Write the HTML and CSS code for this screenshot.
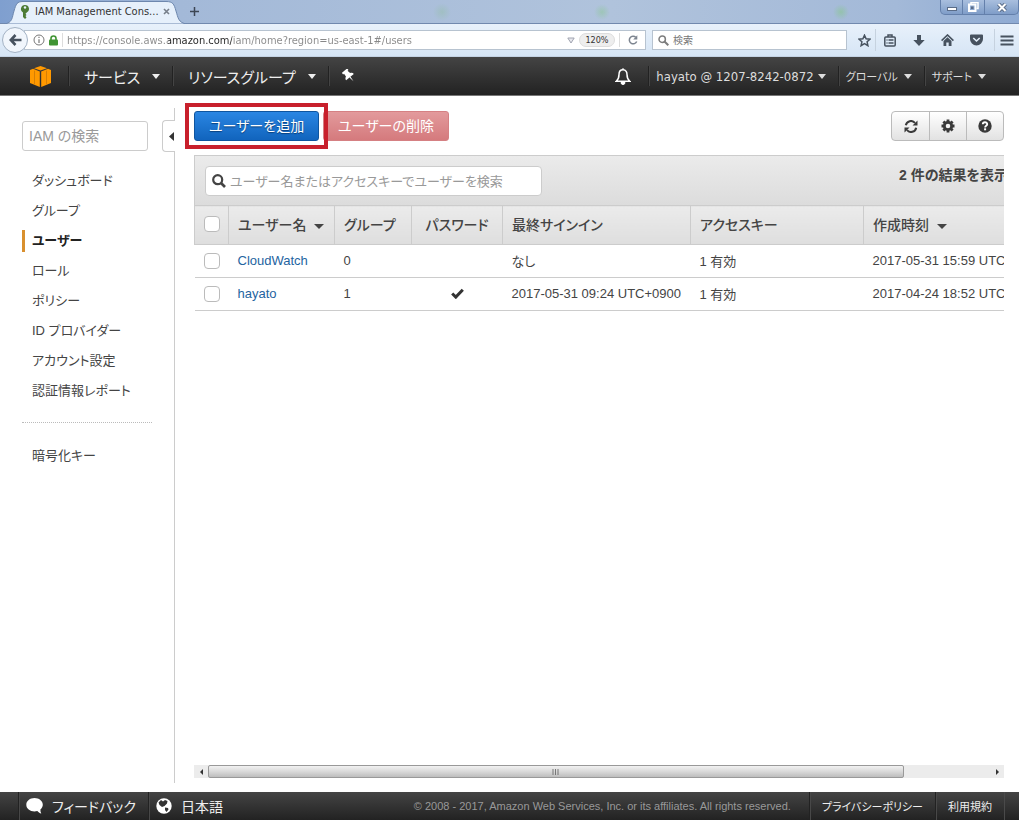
FILE: index.html
```
<!DOCTYPE html>
<html lang="ja">
<head>
  <meta charset="utf-8">
  <title>IAM Management Console</title>
  <link rel="stylesheet" href="styles.css">
</head>
<body>

<!-- browser window -->
<div class="tabbar">
  <div class="tab">
    <svg class="tab-shape" width="184" height="24" viewBox="0 0 184 24"><path d="M0 24C9 23 8 17 10 11C12 4 13 1.500 19 1.500H162C169 1.500 170 4 172 11C174 17 174 23 183 24Z" fill="#e6f0fb" stroke="#6d87ae"/></svg>
    <svg class="tab-icon" width="10" height="14" viewBox="0 0 10 14"><path d="M5 0a4 4 0 0 0-2 7.500V12l2 2 1.500-1.500L5.500 11l1-1-1-1.300 1-1A4 4 0 0 0 5 0z" fill="#4d7c35"/><circle cx="5" cy="2.500" r="1.200" fill="#e6f0fb"/></svg>
    <span class="tab-title">IAM Management Cons...</span>
    <button class="tab-close" aria-label="閉じる"><svg width="7" height="7" viewBox="0 0 7 7"><path d="M1 1l5 5M6 1L1 6" stroke="#777f8a" stroke-width="1.600"/></svg></button>
  </div>
  <button class="tab-new" aria-label="新しいタブ"><svg width="9" height="9" viewBox="0 0 9 9"><path d="M4.500 0v9M0 4.500h9" stroke="#3c4654" stroke-width="1.500"/></svg></button>
  <div class="win-buttons">
    <button aria-label="最小化"><svg width="10" height="10" viewBox="0 0 10 10"><rect x=".5" y="5.500" width="9" height="3" fill="#fff" stroke="#5a6c88"/></svg></button>
    <button aria-label="元に戻す"><svg width="11" height="10" viewBox="0 0 11 10"><path d="M3 2V.5h7v6H8.500" fill="none" stroke="#fff" stroke-width="1.500"/><rect x="1" y="2.500" width="6.500" height="6.500" fill="none" stroke="#fff" stroke-width="2"/><rect x="3" y="4.500" width="2.500" height="2.500" fill="#5a6c88"/></svg></button>
    <button class="win-close" aria-label="ウィンドウを閉じる"><svg width="10" height="9" viewBox="0 0 10 9"><path d="M1.500 1l7 7M8.500 1l-7 7" stroke="#5a6c88" stroke-width="4"/><path d="M1.500 1l7 7M8.500 1l-7 7" stroke="#fff" stroke-width="2"/></svg></button>
  </div>
</div>

<div class="navbar">
  <button class="back" aria-label="戻る"><svg width="13" height="12" viewBox="0 0 13 12"><path d="M6.500 1L1.800 6l4.700 5M2 6h10.500" fill="none" stroke="#47525f" stroke-width="2.600"/></svg></button>
  <div class="urlbox">
    <svg width="12" height="12" viewBox="0 0 12 12"><circle cx="6" cy="6" r="5" fill="none" stroke="#777"/><path d="M6 5.200V9M6 2.800v1.300" stroke="#777" stroke-width="1.200"/></svg>
    <svg width="9" height="11" viewBox="0 0 9 11"><path d="M2 5V3.500a2.500 2.500 0 0 1 5 0V5" fill="none" stroke="#3f9433" stroke-width="1.600"/><rect y="4.500" width="9" height="6" rx="1" fill="#3f9433"/></svg>
    <input class="url" type="text" aria-label="URL" value="https://console.aws.amazon.com/iam/home?region=us-east-1#/users">
    <svg width="8" height="7" viewBox="0 0 8 7"><path d="M.8 1h6.400L4 6z" fill="#e8e8ee" stroke="#a0a4b0"/></svg>
    <button class="zoom">120%</button>
    <button class="reload" aria-label="更新"><svg width="10" height="10" viewBox="0 0 10 10"><path d="M7.800 2.300A3.800 3.800 0 1 0 8.700 6.500" fill="none" stroke="#7d8590" stroke-width="1.500"/><path d="M9.300.3v4.200H5.200z" fill="#7d8590"/></svg></button>
  </div>
  <label class="searchbox">
    <svg width="11" height="11" viewBox="0 0 11 11"><circle cx="4.200" cy="4.200" r="3.200" fill="none" stroke="#7d7d7d" stroke-width="1.500"/><path d="M6.500 6.500L10.300 10.300" stroke="#7d7d7d" stroke-width="2"/></svg>
    <input type="text" placeholder="検索" aria-label="検索">
  </label>
  <div class="tools">
    <button aria-label="ブックマーク"><svg width="13" height="13" viewBox="0 0 13 13"><path d="M6.500 1.200l1.600 3.600 3.900.4-2.900 2.600.8 3.900-3.400-2-3.400 2 .8-3.900L1 5.200l3.900-.4z" fill="none" stroke="#47525f" stroke-width="1.500"/></svg></button>
    <button class="split" aria-label="ブックマーク一覧"><svg width="12" height="13" viewBox="0 0 12 13"><path d="M4 3V1h4v2" fill="none" stroke="#47525f" stroke-width="1.500"/><rect x=".8" y="3" width="10.400" height="9" rx="1" fill="none" stroke="#47525f" stroke-width="1.500"/><path d="M2.500 6h1M4.500 6h5M2.500 9h1M4.500 9h5" stroke="#47525f" stroke-width="1.300"/></svg></button>
    <button aria-label="ダウンロード"><svg width="12" height="13" viewBox="0 0 12 13"><path d="M4 1h4v5h3.700L6 12 .3 6H4z" fill="#47525f"/></svg></button>
    <button aria-label="ホーム"><svg width="13" height="12" viewBox="0 0 13 12"><path d="M.6 6.600L6.500 1l5.900 5.600" fill="none" stroke="#47525f" stroke-width="1.600"/><path d="M2.500 7l4-3.700 4 3.700v5H7.700V8.500H5.300V12H2.500z" fill="#47525f"/></svg></button>
    <button aria-label="Pocket"><svg width="13" height="12" viewBox="0 0 13 12"><path d="M1 .5h11a1 1 0 0 1 1 1V5a6.500 6.500 0 0 1-13 0V1.500a1 1 0 0 1 1-1z" fill="#47525f"/><path d="M3.300 4l3.200 3 3.200-3" fill="none" stroke="#e4effa" stroke-width="1.600"/></svg></button>
    <button class="split" aria-label="メニュー"><svg width="14" height="11" viewBox="0 0 14 11"><path d="M.5 1.500h13M.5 5.500h13M.5 9.500h13" stroke="#47525f" stroke-width="2"/></svg></button>
  </div>
</div>

<!-- console header -->
<header class="aws-nav">
  <a class="logo" href="#" aria-label="AWS"><svg width="21" height="21" viewBox="0 0 21 21"><path d="M10.500 0L17 2.200l-6.500 2.300L4 2.200zM0 4l3-1.200L9.800 5.500V21L0 17zM21 4l-3-1.200-6.800 2.700V21L21 17z" fill="#f90"/><path d="M4.500 4.700v13.700M16.500 4.700v13.700" stroke="#d67f05"/></svg></a>
  <button class="nav-item">サービス <i class="caret"></i></button>
  <button class="nav-item">リソースグループ <i class="caret"></i></button>
  <button class="nav-item pin" aria-label="ピン留め"><svg width="14" height="14" viewBox="0 0 14 14"><g transform="rotate(-40 7 7)" fill="#fff"><path d="M3.500 0h7v2H9.300l.4 3.500c1.600.7 2.300 1.600 2.300 3H2c0-1.400.7-2.300 2.300-3L4.700 2H3.500z"/><path d="M6.300 8.500h1.400L7 14z"/></g></svg></button>
  <div class="nav-right">
    <button class="bell" aria-label="通知"><svg width="16" height="17" viewBox="0 0 16 17"><path d="M8 1.800C4.900 1.800 4 4.400 4 6.500c0 3.800-1 5.200-2.700 6.700h13.400C13 11.700 12 10.300 12 6.500c0-2.100-.9-4.700-4-4.700z" fill="none" stroke="#fff" stroke-width="1.500"/><path d="M8 0v2M6 14.500h4a2 2 0 0 1-4 0z" stroke="#fff" fill="#fff"/></svg></button>
    <button class="nav-item account">hayato @ 1207-8242-0872 <i class="caret"></i></button>
    <button class="nav-item">グローバル <i class="caret"></i></button>
    <button class="nav-item">サポート <i class="caret"></i></button>
  </div>
</header>

<div class="page">
  <aside class="sidebar">
    <input class="side-search" type="text" placeholder="IAM の検索" aria-label="IAM の検索">
    <nav class="side-nav">
      <a href="#">ダッシュボード</a>
      <a href="#">グループ</a>
      <a class="active" href="#">ユーザー</a>
      <a href="#">ロール</a>
      <a href="#">ポリシー</a>
      <a href="#">ID プロバイダー</a>
      <a href="#">アカウント設定</a>
      <a href="#">認証情報レポート</a>
      <hr>
      <a href="#">暗号化キー</a>
    </nav>
    <button class="collapse" aria-label="サイドバーを閉じる"><svg width="5" height="9" viewBox="0 0 5 9"><path d="M5 0v9L0 4.500z" fill="#333"/></svg></button>
  </aside>

  <main class="content">
    <div class="actions">
      <div class="marked"><button class="btn primary">ユーザーを追加</button></div>
      <button class="btn danger">ユーザーの削除</button>
      <div class="btn-group">
        <button aria-label="更新"><svg width="14" height="13" viewBox="0 0 14 13"><path d="M1.800 5.300A5.200 5.200 0 0 1 11 3M12.200 7.700A5.200 5.200 0 0 1 3 10" fill="none" stroke="#3a3a3a" stroke-width="2"/><path d="M13.500.5v5h-5zM.5 12.500v-5h5z" fill="#3a3a3a"/></svg></button>
        <button aria-label="設定"><svg width="14" height="14" viewBox="0 0 14 14"><path d="M7 .5v13M.5 7h13M2.400 2.400l9.200 9.200M11.600 2.400l-9.200 9.200" stroke="#3a3a3a" stroke-width="2.800"/><circle cx="7" cy="7" r="3.700" fill="#f2f2f2" stroke="#3a3a3a" stroke-width="2.800"/></svg></button>
        <button aria-label="ヘルプ"><svg width="14" height="14" viewBox="0 0 14 14"><circle cx="7" cy="7" r="6.700" fill="#3a3a3a"/><path d="M4.800 5.300C4.800 2.600 9.200 2.600 9.200 5.200 9.200 6.800 7.100 6.700 7.100 8.400" fill="none" stroke="#fff" stroke-width="1.900"/><rect x="6.100" y="9.300" width="2" height="2" fill="#fff"/></svg></button>
      </div>
    </div>

    <div class="panel">
      <div class="filter">
        <label class="user-search">
          <svg width="14" height="14" viewBox="0 0 14 14"><circle cx="5.700" cy="5.700" r="4.500" fill="none" stroke="#444" stroke-width="2.200"/><path d="M9 9l4 4" stroke="#444" stroke-width="2.600"/></svg>
          <input type="text" placeholder="ユーザー名またはアクセスキーでユーザーを検索" aria-label="ユーザーを検索">
        </label>
        <strong class="count">2 件の結果を表示</strong>
      </div>
      <table class="users">
        <colgroup>
          <col class="c-check"><col class="c-name"><col class="c-group"><col class="c-pass"><col class="c-signin"><col class="c-key"><col class="c-date">
        </colgroup>
        <thead>
          <tr>
            <th><input type="checkbox" aria-label="すべて選択"></th>
            <th>ユーザー名 <i class="caret"></i></th>
            <th>グループ</th>
            <th class="center">パスワード</th>
            <th>最終サインイン</th>
            <th>アクセスキー</th>
            <th>作成時刻 <i class="caret"></i></th>
          </tr>
        </thead>
        <tbody>
          <tr>
            <td><input type="checkbox" aria-label="CloudWatch"></td>
            <td><a href="#">CloudWatch</a></td>
            <td>0</td>
            <td></td>
            <td>なし</td>
            <td>1 有効</td>
            <td>2017-05-31 15:59 UTC+0900</td>
          </tr>
          <tr>
            <td><input type="checkbox" aria-label="hayato"></td>
            <td><a href="#">hayato</a></td>
            <td>1</td>
            <td class="center"><svg width="13" height="11" viewBox="0 0 13 11"><path d="M1.200 5.500l3.600 3.600 7-7.400" fill="none" stroke="#333" stroke-width="3"/></svg></td>
            <td>2017-05-31 09:24 UTC+0900</td>
            <td>1 有効</td>
            <td>2017-04-24 18:52 UTC+0900</td>
          </tr>
        </tbody>
      </table>
    </div>

    <div class="scrollbar">
      <button aria-label="左へ"><svg width="3" height="6" viewBox="0 0 3 6"><path d="M3 0v6L0 3z" fill="#333"/></svg></button>
      <div class="track"><div class="thumb"><svg width="7" height="6" viewBox="0 0 7 6"><path d="M1 0v6M3.500 0v6M6 0v6" stroke="#777"/></svg></div></div>
      <button aria-label="右へ"><svg width="3" height="6" viewBox="0 0 3 6"><path d="M0 0v6l3-3z" fill="#333"/></svg></button>
    </div>
  </main>
</div>

<footer class="aws-footer">
  <button class="foot-item"><svg width="17" height="16" viewBox="0 0 17 16"><path d="M8.500 0C4 0 .3 2.900.3 6.700s3.700 6.700 8.200 6.700c1 0 1.900-.1 2.800-.4.900 1.200 2.300 2.200 4 2.500-.7-1.200-1-2.600-.9-4.100 1.500-1.200 2.400-2.800 2.400-4.700C16.800 2.900 13 0 8.500 0z" fill="#fff"/></svg>フィードバック</button>
  <button class="foot-item"><svg width="16" height="16" viewBox="0 0 16 16"><circle cx="8" cy="8" r="7.700" fill="#fff"/><path d="M2.500 4.500L5 2l2 1.500L9 2l2.500 1-.5 2.500L8.500 8 6 9 3.500 7zM9 9.500l3 .5.500 1.500-2 2.500-1.500-2z" fill="#333"/></svg>日本語</button>
  <span class="copyright">© 2008 - 2017, Amazon Web Services, Inc. or its affiliates. All rights reserved.</span>
  <a class="foot-item small" href="#">プライバシーポリシー</a>
  <a class="foot-item small last" href="#">利用規約</a>
</footer>

</body>
</html>
```
FILE: styles.css
```
* {
  box-sizing: border-box;
}
body {
  margin: 0;
  padding-right: 5px;
  min-height: 100vh;
  display: flex;
  flex-direction: column;
  background: #fff;
  color: #444;
  font-family: "Liberation Sans", "Noto Sans CJK JP", sans-serif;
  font-size: 13px;
  font-feature-settings: "palt";
}
button, input {
  margin: 0;
  padding: 0;
  border: 0;
  background: none;
  color: inherit;
  font: inherit;
  font-feature-settings: inherit;
  outline: none;
}
button {
  display: flex;
  align-items: center;
  justify-content: center;
  white-space: nowrap;
}
a {
  color: inherit;
  text-decoration: none;
}
svg {
  display: block;
  flex: none;
}
.caret {
  display: inline-block;
  border: 4px solid transparent;
  border-top: 5px solid currentColor;
  border-bottom: 0;
}

/* browser window */
.tabbar {
  display: flex;
  height: 24px;
  padding-left: 4px;
  border-bottom: 1px solid #7189ae;
  background:
    radial-gradient(circle at 442px 12px, rgba(140,190,150,.35), transparent 9px),
    radial-gradient(ellipse at 522px 13px, rgba(70,95,125,.35), transparent 9px),
    radial-gradient(circle at 602px 12px, rgba(130,200,130,.4), transparent 8px),
    radial-gradient(circle at 841px 12px, rgba(130,200,130,.5), transparent 8px),
    linear-gradient(90deg, #7f9fcf 0, #a3b9d8 180px, #b0c3dc 60%, #a3b9d8 88%, #8fabd3);
}
.tab {
  position: relative;
  display: flex;
  align-items: center;
  width: 178px;
  padding-left: 16px;
  font: 11px "DejaVu Sans Condensed", "DejaVu Sans", sans-serif;
  color: #333;
}
.tab-shape {
  position: absolute;
  left: 0;
  top: 0;
}
.tab-icon, .tab-title, .tab-close {
  position: relative;
}
.tab-title {
  margin-left: 5px;
  width: 128px;
  white-space: nowrap;
}
.tab-new {
  width: 24px;
}
.win-buttons {
  display: flex;
  margin-left: auto;
  height: 15px;
  border: 1px solid #6480ab;
  border-top: 0;
  border-radius: 0 0 5px 5px;
  background: linear-gradient(#a9bfde, #7f9dc8);
}
.win-buttons button {
  width: 22px;
  border-right: 1px solid #6480ab;
}
.win-buttons .win-close {
  width: 33px;
  border: 0;
}
.navbar {
  display: flex;
  align-items: center;
  height: 33px;
  padding-left: 2px;
  background: linear-gradient(#e8f1fb, #d6e5f5);
  border-bottom: 1px solid #c4d3e4;
}
.back {
  z-index: 1;
  width: 26px;
  height: 26px;
  border: 1px solid #a3b2c4;
  border-radius: 50%;
  background: #f1f6fc;
}
.urlbox, .searchbox {
  display: flex;
  align-items: center;
  height: 20px;
  border: 1px solid #b7c3d0;
  background: #fff;
  font: 11px "DejaVu Sans Condensed", "Noto Sans CJK JP", sans-serif;
}
.urlbox {
  flex: 1;
  gap: 4px;
  margin-left: -4px;
  padding-left: 8px;
}
/* domain part of the address is darker */
.url {
  flex: 1;
  min-width: 0;
  height: 14px;
  padding-left: 4px;
  border-left: 1px solid #ddd;
  color: #888;
  background: linear-gradient(90deg, #888 105px, #222 105px, #222 169px, #888 169px);
  -webkit-background-clip: text;
  background-clip: text;
  -webkit-text-fill-color: transparent;
}
.zoom {
  width: 36px;
  height: 14px;
  border: 1px solid #ddd;
  border-radius: 7px;
  background: #eee;
  color: #333;
  font-size: 9px;
}
.reload {
  width: 26px;
  height: 14px;
  border-left: 1px solid #ddd;
}
.searchbox {
  width: 195px;
  margin-left: 6px;
  padding-left: 5px;
  gap: 4px;
  font-size: 10px;
}
.searchbox input {
  flex: 1;
  min-width: 0;
}
.searchbox input::placeholder {
  color: #777;
}
.tools {
  display: flex;
  margin-left: 6px;
}
.tools button {
  width: 29px;
  height: 22px;
}
.tools button:first-child {
  width: 22px;
}
.tools .split {
  border-left: 1px solid #c6d2df;
}
.tools .split:last-child {
  width: 25px;
  margin-left: 3px;
}

/* console header */
.aws-nav {
  display: flex;
  align-items: center;
  height: 39px;
  padding: 0 28px 0 30px;
  border-bottom: 1px solid #777;
  background: linear-gradient(#444, #222);
  color: #eee;
}
.logo {
  width: 38px;
}
.nav-item {
  height: 20px;
  padding: 0 12px 0 15px;
  gap: 12px;
  border-left: 1px solid #222;
  box-shadow: inset 1px 0 #444;
  font-size: 15px;
}
.pin {
  padding: 0 13px;
}
.nav-right {
  display: flex;
  align-items: center;
  margin-left: auto;
}
.bell {
  margin-right: 17px;
}
.nav-right .nav-item {
  padding: 0 12px 0 7px;
  gap: 6px;
  font-size: 11px;
  color: #ddd;
}
.nav-right .nav-item:last-child {
  padding-right: 5px;
}
.nav-right .account {
  gap: 4px;
  font: 13px "DejaVu Sans Condensed", "DejaVu Sans", sans-serif;
}

.page {
  flex: 1;
  display: flex;
}
.sidebar {
  position: relative;
  width: 175px;
  margin: 12px 0 9px;
  padding: 13px 22px 0;
  border-right: 1px solid #ccc;
}
.side-search {
  width: 126px;
  height: 30px;
  padding: 0 6px;
  border: 1px solid #ccc;
  border-radius: 3px;
  font-size: 14px;
}
::placeholder {
  color: #999;
}
.side-nav {
  display: flex;
  flex-direction: column;
  gap: 8px;
  margin-top: 19px;
  font-size: 13px;
}
.side-nav a {
  line-height: 22px;
  padding-left: 7px;
  border-left: 3px solid transparent;
  white-space: nowrap;
}
.side-nav .active {
  border-color: #d9902f;
  color: #222;
  font-weight: bold;
}
.side-nav hr {
  width: 130px;
  margin: 12px 0 14px;
  border: 0;
  border-top: 1px dotted #bbb;
}
.collapse {
  position: absolute;
  right: -1px;
  top: 12px;
  width: 13px;
  height: 32px;
  padding-left: 4px;
  border: 1px solid #ccc;
  border-right: 0;
  border-radius: 4px 0 0 4px;
  background: #fff;
}

.content {
  flex: 1;
  min-width: 0;
  display: flex;
  flex-direction: column;
  padding: 15px 15px 14px 19px;
}
.actions {
  display: flex;
  gap: 4px;
  height: 30px;
}
.btn {
  height: 30px;
  padding-bottom: 2px;
  border: 1px solid;
  border-radius: 3px;
  color: #fff;
  font-size: 14px;
}
.primary {
  width: 125px;
  border-color: #0f559f;
  background: linear-gradient(#2a86e3, #1164bd);
  text-shadow: 0 1px 1px #0a3f7a;
}
.danger {
  width: 126px;
  border-color: #d58083;
  background: linear-gradient(#e39a9c, #d57a7d);
}
.marked {
  position: relative;
}
.marked::after {
  content: "";
  position: absolute;
  inset: -8px -9px;
  border: 4px solid #c8202c;
}
.btn-group {
  display: flex;
  margin-left: auto;
  border: 1px solid #bbb;
  border-radius: 4px;
  background: linear-gradient(#fff, #e2e2e2);
}
.btn-group button {
  width: 37px;
}
.btn-group button + button {
  border-left: 1px solid #bbb;
}

.panel {
  flex: 1;
  margin-top: 14px;
  overflow: hidden;
}
.filter {
  display: flex;
  width: 840px;
  height: 50px;
  padding: 10px;
  border: 1px solid #ccc;
  border-bottom: 0;
  background: linear-gradient(#ebebeb, #dcdcdc);
}
.user-search {
  display: flex;
  align-items: center;
  width: 337px;
  height: 30px;
  padding: 0 6px;
  gap: 4px;
  border: 1px solid #ccc;
  border-radius: 4px;
  background: #fff;
}
.user-search input {
  flex: 1;
}
.count {
  margin-left: auto;
  width: 124px;
  font-size: 14px;
  line-height: 18px;
  white-space: nowrap;
}
.users {
  width: 880px;
  table-layout: fixed;
  border-collapse: collapse;
}
.c-check { width: 34px; }
.c-name { width: 106px; }
.c-group { width: 77px; }
.c-pass { width: 91px; }
.c-signin { width: 188px; }
.c-key { width: 173px; }
.users th {
  height: 39px;
  padding: 0 9px 2px;
  border: 1px solid #ccc;
  background: linear-gradient(#ebebeb, #dedede);
  font-size: 14px;
  font-weight: 500;
  text-align: left;
  white-space: nowrap;
}
.users th .caret {
  margin-left: 4px;
  border-width: 5px 5px 0;
  vertical-align: 1px;
}
.users td {
  height: 33px;
  padding: 0 9px 1px;
  border-bottom: 1px solid #ccc;
  white-space: nowrap;
}
.users a {
  color: #24649f;
}
.users .center {
  text-align: center;
}
.users .center svg {
  margin: 0 auto;
}
.users input {
  display: block;
  appearance: none;
  width: 16px;
  height: 16px;
  border: 1px solid #bbb;
  border-radius: 4px;
  background: #fff;
}

.scrollbar {
  display: flex;
  height: 13px;
  background: #ececec;
}
.scrollbar button {
  width: 14px;
}
.track {
  flex: 1;
  display: flex;
}
.thumb {
  display: flex;
  align-items: center;
  justify-content: center;
  width: 89%;
  border: 1px solid #999;
  border-radius: 2px;
  background: linear-gradient(#f2f2f2, #d9d9d9 50%, #bdbdbd);
}

.aws-footer {
  display: flex;
  align-items: center;
  height: 28px;
  padding: 0 14px 0 18px;
  background: linear-gradient(#444, #222);
  color: #eee;
}
.foot-item {
  display: flex;
  align-items: center;
  height: 28px;
  padding: 0 12px 0 7px;
  gap: 9px;
  border-left: 1px solid #222;
  box-shadow: inset 1px 0 #484848;
  font-size: 14px;
  white-space: nowrap;
}
.small {
  padding: 0 12px;
  font-size: 11px;
}
.last {
  border-right: 1px solid #4a4a4a;
}
.copyright {
  margin: 0 18px 0 auto;
  color: #999;
  font-size: 11px;
}
```
